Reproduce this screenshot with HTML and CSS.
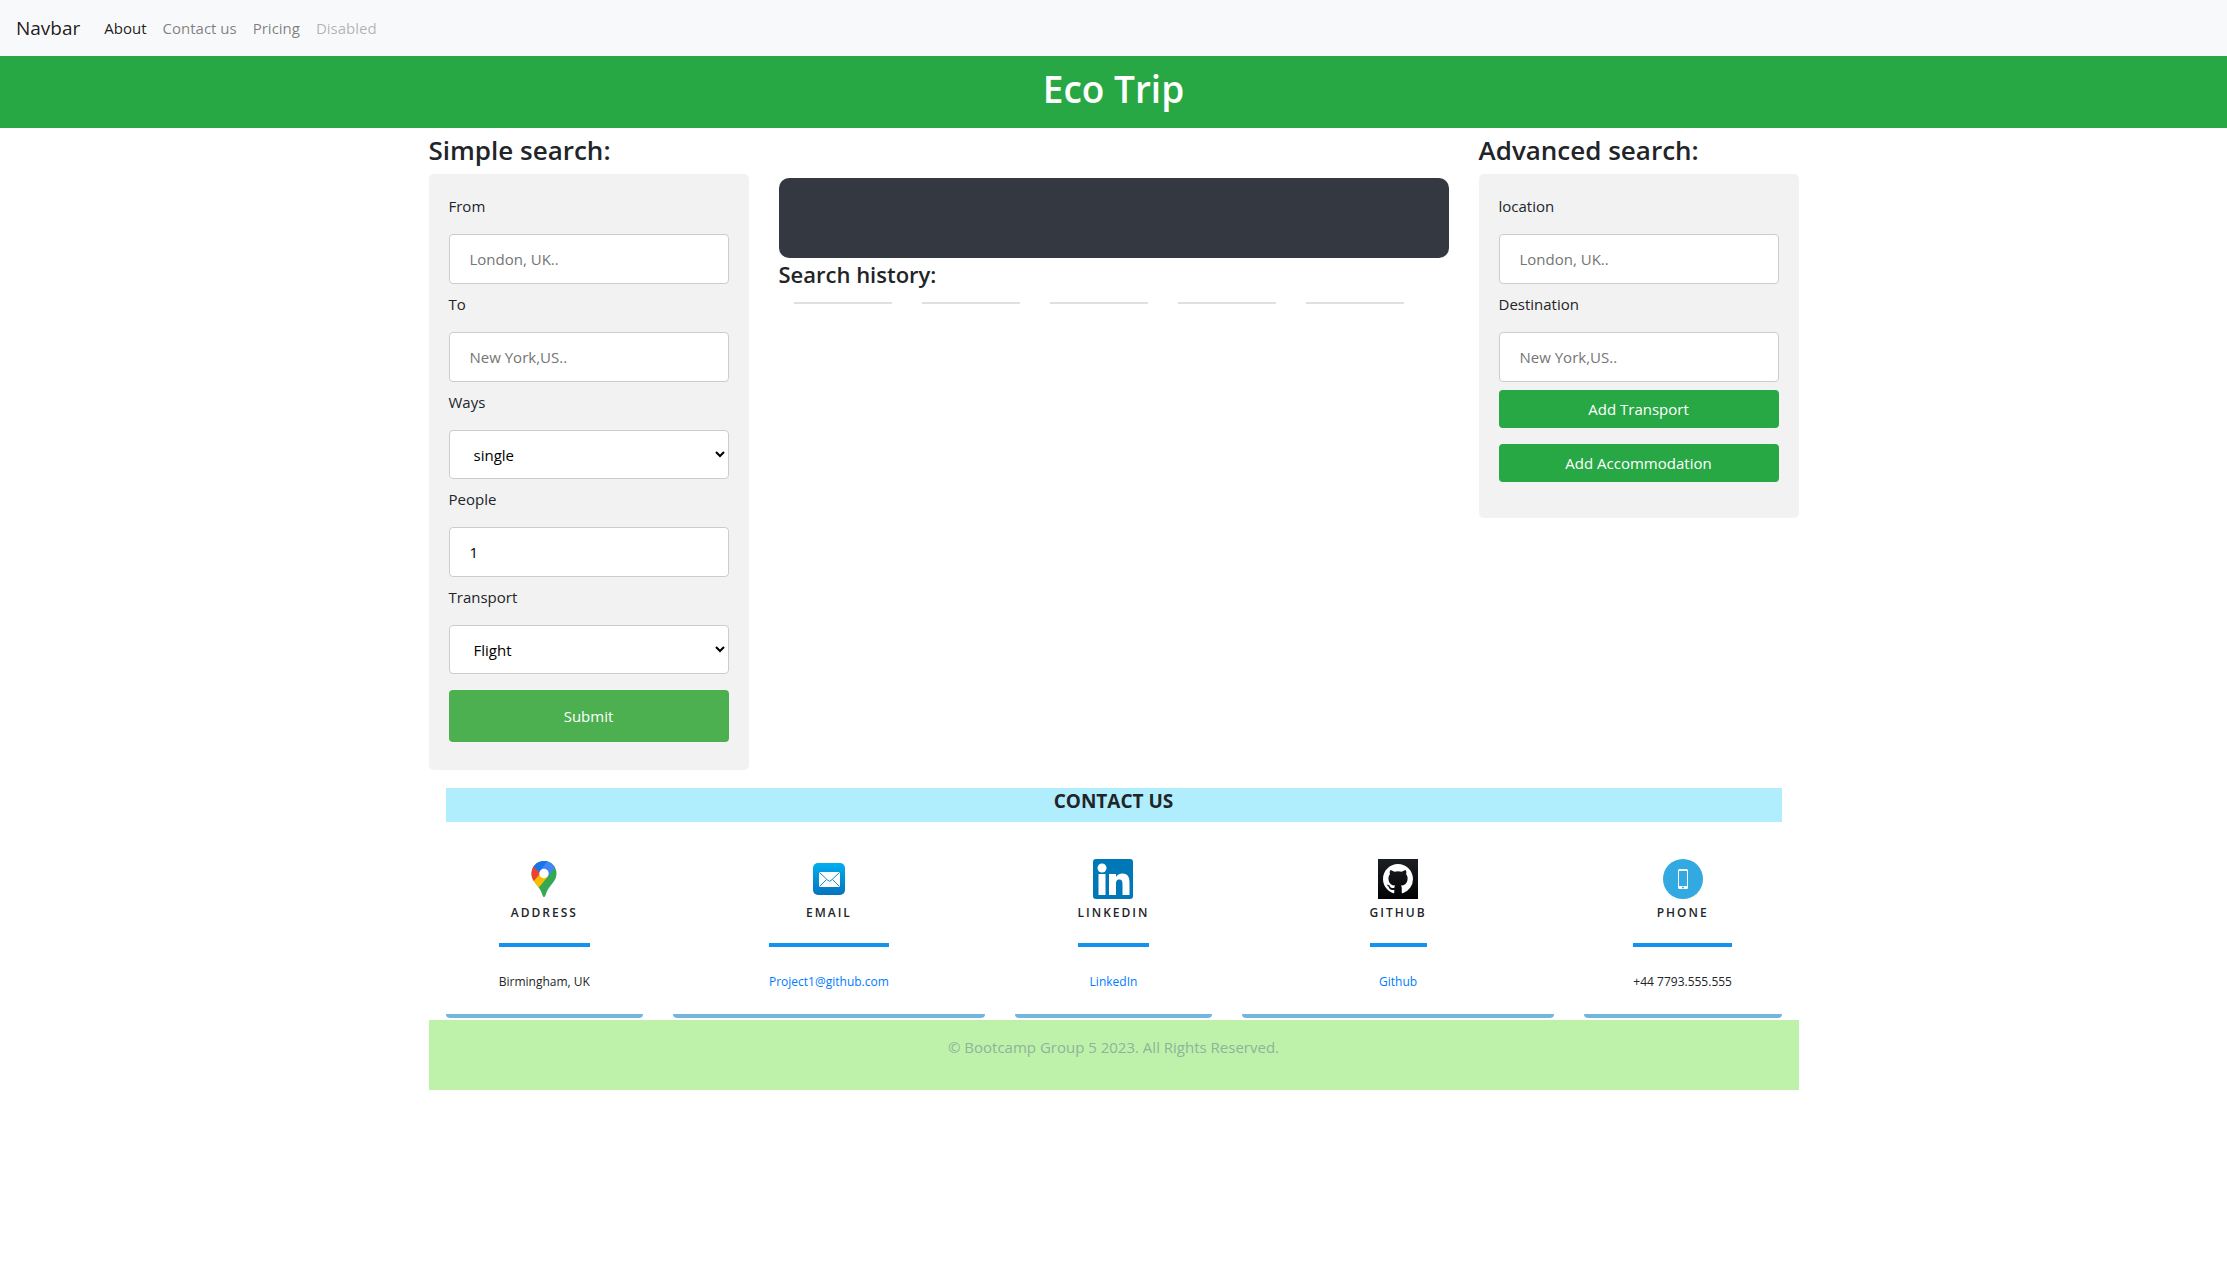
FILE: index.html
```html
<!DOCTYPE html>
<html lang="en">
<head>
  <meta charset="utf-8">
  <meta name="viewport" content="width=device-width, initial-scale=1">
  <title>Eco Trip</title>
  <link rel="stylesheet" href="styles.css">
</head>
<body>
  <nav class="navbar">
    <a class="navbar-brand" href="#">Navbar</a>
    <ul class="nav-list">
      <li><a class="nav-link active" href="#about">About</a></li>
      <li><a class="nav-link" href="#contact">Contact us</a></li>
      <li><a class="nav-link" href="#pricing">Pricing</a></li>
      <li><a class="nav-link disabled" href="#" aria-disabled="true">Disabled</a></li>
    </ul>
  </nav>

  <header class="banner">
    <h1>Eco Trip</h1>
  </header>

  <div class="container">
    <main class="columns">
      <section class="side">
        <h2 class="side-title">Simple search:</h2>
        <form class="panel">
          <label for="from">From</label>
          <input class="field" type="text" id="from" placeholder="London, UK..">
          <label for="to">To</label>
          <input class="field" type="text" id="to" placeholder="New York,US..">
          <label for="ways">Ways</label>
          <select class="field" id="ways">
            <option>single</option>
            <option>return</option>
          </select>
          <label for="people">People</label>
          <input class="field" type="number" id="people" value="1" min="1">
          <label for="transport">Transport</label>
          <select class="field" id="transport">
            <option>Flight</option>
            <option>Train</option>
          </select>
          <button class="submit" type="submit">Submit</button>
        </form>
      </section>

      <section class="middle">
        <div class="result"></div>
        <h3 class="history-title">Search history:</h3>
        <ul class="history">
          <li></li>
          <li></li>
          <li></li>
          <li></li>
          <li></li>
        </ul>
      </section>

      <section class="side">
        <h2 class="side-title">Advanced search:</h2>
        <form class="panel panel-advanced">
          <label for="location">location</label>
          <input class="field" type="text" id="location" placeholder="London, UK..">
          <label for="destination">Destination</label>
          <input class="field" type="text" id="destination" placeholder="New York,US..">
          <button class="add" type="button">Add Transport</button>
          <button class="add" type="button">Add Accommodation</button>
        </form>
      </section>
    </main>

    <section class="contact" id="contact">
      <h2 class="contact-title">CONTACT US</h2>
      <div class="cards">
        <div class="card">
          <div class="card-body">
            <svg class="icon" viewBox="0 0 40 40" aria-hidden="true">
              <defs>
                <clipPath id="pin">
                  <path d="M20 2C13 2 7.500 7.500 7.500 14.500c0 4 1.500 6.800 4 9.700 3.200 3.800 5.200 6.600 6.500 10.500.5 1.700 1 3.300 2 3.300s1.500-1.600 2-3.300c1.300-3.900 3.300-6.700 6.500-10.500 2.500-2.900 4-5.700 4-9.700C32.500 7.500 27 2 20 2z"/>
                </clipPath>
              </defs>
              <g clip-path="url(#pin)">
                <path fill="#34a853" d="M0 0h40v40H0z"/>
                <path fill="#fbbc04" d="M0 22.500 16.500 11 24 17.500 14.800 28.500 0 40z"/>
                <path fill="#ea4335" d="M0 0 10.200 6.200 18 12.500 9.200 22.800H0z"/>
                <path fill="#1a73e8" d="M5 0h20l1 2-10 12-5.800-5.800L5 5z"/>
                <path fill="#4285f4" d="M24 1.500 40 0 31 8.800 23.500 17.800 16.500 11z"/>
              </g>
              <circle cx="20" cy="14.500" r="4.700" fill="#fff"/>
            </svg>
            <h3 class="card-title">ADDRESS</h3>
            <p class="card-text">Birmingham, UK</p>
          </div>
        </div>

        <div class="card">
          <div class="card-body">
            <svg class="icon" viewBox="0 0 40 40" aria-hidden="true">
              <defs>
                <linearGradient id="mail" x1="0" y1="0" x2="0" y2="1">
                  <stop offset="0" stop-color="#00aeef"/>
                  <stop offset="1" stop-color="#0474bd"/>
                </linearGradient>
              </defs>
              <rect x="4" y="4" width="32" height="32" rx="5" fill="url(#mail)"/>
              <rect x="10" y="13" width="21" height="15" rx="1" fill="#fff"/>
              <path d="m10.500 13.500 8.500 8q1.500 1.300 3 0l8.500-8M10.500 27.500l7-7M30.500 27.500l-7-7" fill="none" stroke="#1290d2"/>
            </svg>
            <h3 class="card-title">EMAIL</h3>
            <p class="card-text"><a href="mailto:Project1@github.com">Project1@github.com</a></p>
          </div>
        </div>

        <div class="card">
          <div class="card-body">
            <svg class="icon" viewBox="0 0 40 40" aria-hidden="true">
              <rect width="40" height="40" rx="3" fill="#0077b7"/>
              <circle cx="9" cy="9" r="4.500" fill="#fff"/>
              <path fill="#fff" d="M5.500 15h7v21h-7zM16 15h7v3c1.200-2.100 3.500-3.500 6.500-3.500 5.500 0 7 3.800 7 9.500v12h-7V25.500c0-2.700-.4-5-3.200-5S23 22.500 23 25.500V36h-7z"/>
            </svg>
            <h3 class="card-title">LINKEDIN</h3>
            <p class="card-text"><a href="#linkedin">LinkedIn</a></p>
          </div>
        </div>

        <div class="card">
          <div class="card-body">
            <svg class="icon" viewBox="0 0 40 40" aria-hidden="true">
              <defs>
                <linearGradient id="dark" x1="0" y1="0" x2="0" y2="1">
                  <stop offset="0" stop-color="#1b1f24"/>
                  <stop offset="1" stop-color="#020202"/>
                </linearGradient>
              </defs>
              <path fill="url(#dark)" d="M0 0h40v40H0z"/>
              <path fill="#fff" transform="translate(5 5) scale(1.875)" d="M8 0C3.580 0 0 3.580 0 8c0 3.540 2.290 6.530 5.470 7.590.4.070.55-.17.55-.38 0-.19-.01-.82-.01-1.490-2.010.37-2.530-.49-2.690-.94-.09-.23-.48-.94-.82-1.130-.28-.15-.68-.52-.01-.53.63-.01 1.080.58 1.230.82.72 1.210 1.870.87 2.330.66.07-.52.28-.87.51-1.070-1.780-.2-3.640-.89-3.640-3.950 0-.87.31-1.590.82-2.150-.08-.2-.36-1.020.08-2.120 0 0 .67-.21 2.200.82.64-.18 1.320-.27 2-.27s1.360.09 2 .27c1.530-1.040 2.200-.82 2.200-.82.44 1.100.16 1.920.08 2.120.51.56.82 1.270.82 2.150 0 3.070-1.870 3.750-3.650 3.950.29.25.54.73.54 1.480 0 1.070-.01 1.930-.01 2.200 0 .21.15.46.55.38A8.010 8.010 0 0 0 16 8c0-4.420-3.580-8-8-8z"/>
            </svg>
            <h3 class="card-title">GITHUB</h3>
            <p class="card-text"><a href="#github">Github</a></p>
          </div>
        </div>

        <div class="card">
          <div class="card-body">
            <svg class="icon" viewBox="0 0 40 40" aria-hidden="true">
              <circle cx="20" cy="20" r="20" fill="#32a9e0"/>
              <rect x="15" y="10" width="10" height="20" rx="1.500" fill="#fff"/>
              <path fill="#32a9e0" d="M16 12h8v15h-8z"/>
              <circle cx="20" cy="28.500" r="1" fill="#32a9e0"/>
            </svg>
            <h3 class="card-title">PHONE</h3>
            <p class="card-text">+44 7793.555.555</p>
          </div>
        </div>
      </div>
    </section>

    <footer class="footer">© Bootcamp Group 5 2023. All Rights Reserved.</footer>
  </div>
</body>
</html>
```

FILE: styles.css
```css
* {
  box-sizing: border-box;
}

body {
  margin: 0;
  background: #fff;
  color: #212529;
  font-family: "Open Sans", "Noto Sans", sans-serif;
  font-size: 15px;
  line-height: 24px;
}

h1,
h2,
h3,
p,
ul {
  margin: 0;
  padding: 0;
}

ul {
  list-style: none;
}

a {
  color: #007bff;
  text-decoration: none;
}

.navbar {
  display: flex;
  flex-wrap: wrap;
  align-items: center;
  gap: 16px;
  padding: 8px 16px;
  background: #f8f9fa;
}

.navbar-brand {
  color: rgba(0, 0, 0, 0.9);
  font-size: 19px;
}

.nav-list {
  display: flex;
  flex-wrap: wrap;
}

.nav-link {
  display: block;
  padding: 8px;
  color: rgba(0, 0, 0, 0.5);
}

.nav-link.active {
  color: rgba(0, 0, 0, 0.9);
}

.nav-link.disabled {
  color: rgba(0, 0, 0, 0.3);
  pointer-events: none;
}

.banner {
  padding: 8px 16px 14px;
  background: #28a745;
  color: #fff;
  text-align: center;
}

.banner h1 {
  font-size: 37px;
  font-weight: 600;
  line-height: 50px;
}

.container {
  max-width: 1400px;
  margin: 0 auto;
  padding: 4px 15px;
}

.columns {
  display: flex;
  align-items: flex-start;
  gap: 30px;
}

.side {
  flex: 0 0 320px;
}

.middle {
  flex: 1;
  min-width: 0;
  padding-top: 46px;
}

.side-title {
  margin-bottom: 6px;
  font-size: 26px;
  font-weight: 600;
  line-height: 36px;
}

.panel {
  display: flex;
  flex-direction: column;
  padding: 20px;
  border-radius: 5px;
  background: #f2f2f2;
}

.panel-advanced {
  padding-bottom: 36px;
}

.panel label {
  margin-bottom: 8px;
}

.field {
  width: 100%;
  height: 50px;
  margin: 8px 0;
  padding: 12px 20px;
  border: 1px solid #ccc;
  border-radius: 4px;
  background: #fff;
  color: #000;
  font: inherit;
}

select.field {
  height: 49px;
}

.field::placeholder {
  color: #757575;
}

.submit {
  margin: 8px 0;
  padding: 14px 20px;
  border: 0;
  border-radius: 4px;
  background: #4caf50;
  color: #fff;
  font: inherit;
}

.add {
  padding: 7px 12px;
  border: 0;
  border-radius: 4px;
  background: #28a745;
  color: #fff;
  font: inherit;
}

.add + .add {
  margin-top: 16px;
}

.result {
  height: 80px;
  border-radius: 10px;
  background: #343841;
}

.history-title {
  font-size: 22px;
  font-weight: 600;
  line-height: 32px;
}

.history {
  display: grid;
  grid-template-columns: repeat(5, 1fr);
  gap: 30px;
  margin: 12px 45px 0 15px;
}

.history li {
  height: 2px;
  background: #dfdfdf;
}

.contact {
  padding: 18px 2px 2px;
}

.contact-title {
  margin: 0 15px;
  padding-bottom: 8px;
  background: #b1eefd;
  font-size: 19px;
  font-weight: 700;
  line-height: 26px;
  text-align: center;
}

.cards {
  display: grid;
  grid-template-columns: 2fr 3fr 2fr 3fr 2fr;
}

.card {
  margin: 0 15px;
  padding: 37px 0 22px;
  border-bottom: 4px solid #74b5df;
  border-radius: 0 0 4px 4px;
  text-align: center;
}

.card-body {
  display: inline-flex;
  flex-direction: column;
  vertical-align: top;
}

.icon {
  align-self: center;
  width: 40px;
  height: 40px;
  margin-bottom: 4px;
}

.card-title {
  margin-bottom: 25px;
  padding-bottom: 20px;
  border-bottom: 4px solid #1393ee;
  font-size: 12px;
  font-weight: 600;
  letter-spacing: 2px;
  line-height: 20px;
}

.card-text {
  font-size: 12px;
  line-height: 20px;
}

.footer {
  padding: 15px 15px 31px;
  background: #bef2aa;
  color: #8fb49b;
  text-align: center;
}

@media (max-width: 1100px) {
  .columns {
    flex-direction: column;
    align-items: stretch;
  }

  .side {
    flex: none;
  }

  .middle {
    flex: none;
    padding-top: 0;
  }

  .cards {
    grid-template-columns: 1fr 1fr;
  }
}
```
